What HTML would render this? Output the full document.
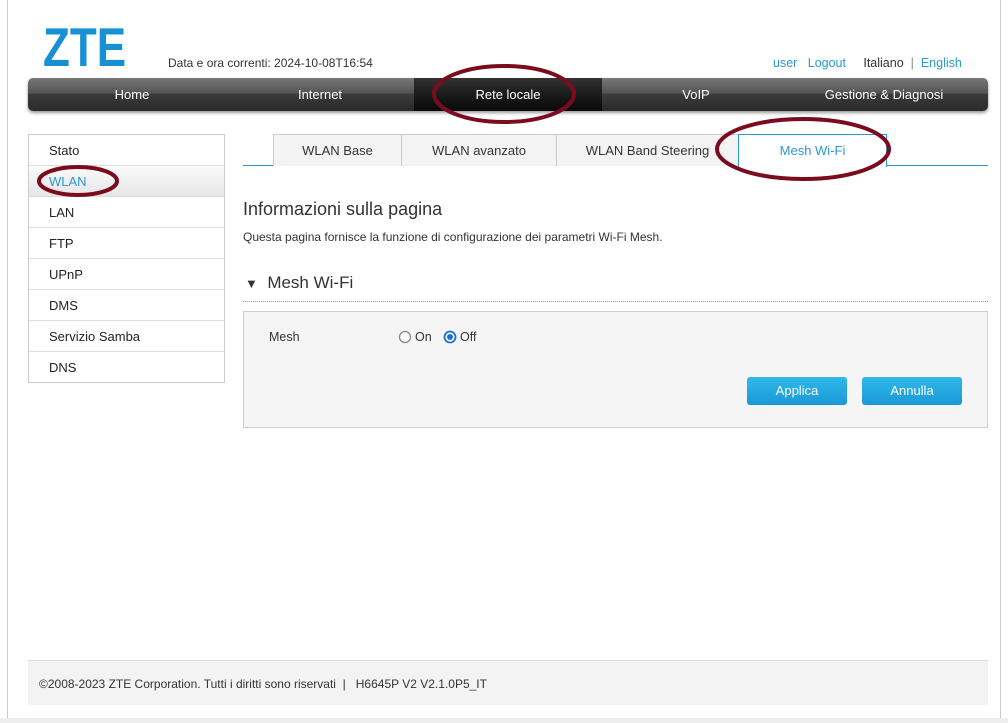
<!DOCTYPE html>
<html><head><meta charset="utf-8"><style>
*{margin:0;padding:0;box-sizing:border-box}
body{width:1008px;height:723px;background:#fff;font-family:"Liberation Sans",sans-serif;position:relative;overflow:hidden;color:#333}
.a{position:absolute}
.lnk{color:#2a9ad0}
.nav{left:28px;top:78px;width:960px;height:33px;border-radius:5px;background:linear-gradient(#777 0%,#555 45%,#3a3a3a 50%,#2a2a2a 100%);box-shadow:0 2px 3px #999;overflow:hidden}
.nav div{position:absolute;top:0;height:33px;line-height:33px;color:#fff;font-size:13px;text-align:center;width:188px}
.side{left:28px;top:134px;width:197px;height:249px;border:1px solid #ccc}
.side div{height:31px;line-height:31px;padding-left:20px;font-size:13px;border-bottom:1px solid #ddd;color:#222}
.tab{top:134px;height:32px;line-height:32px;text-align:center;font-size:13px;background:#f3f3f3;border:1px solid #ccc;border-bottom:none;color:#333}
.btn{top:377px;width:100px;height:28px;border-radius:3px;background:linear-gradient(#30b8ec,#1a98d6);color:#fff;font-size:13px;text-align:center;line-height:28px}
</style></head><body>
<div class="a" style="left:7px;top:0;width:1px;height:718px;background:#ccc"></div>
<div class="a" style="left:1000px;top:0;width:1px;height:718px;background:#ccc"></div>
<div class="a" style="left:0;top:718px;width:1008px;height:5px;background:#eee"></div>
<div class="a" style="left:43px;top:20px;font-size:55px;font-weight:bold;color:#1890d4;line-height:55px;transform:scaleX(0.8);transform-origin:left">ZTE</div>
<div class="a" style="left:168px;top:56px;font-size:12px;color:#333">Data e ora correnti: 2024-10-08T16:54</div>
<div class="a" style="left:773px;top:56px;font-size:12.5px"><span class="lnk">user</span>&nbsp;&nbsp;&nbsp;<span class="lnk">Logout</span>&nbsp;&nbsp;&nbsp;&nbsp;&nbsp;<span>Italiano</span>&nbsp;&nbsp;<span style="color:#888">|</span>&nbsp;&nbsp;<span class="lnk">English</span></div>
<div class="a nav">
<div style="left:10px">Home</div><div style="left:198px">Internet</div>
<div style="left:386px;background:linear-gradient(#333,#1a1a1a 50%,#0a0a0a)">Rete locale</div>
<div style="left:574px">VoIP</div><div style="left:762px">Gestione &amp; Diagnosi</div></div>
<div class="a side">
<div>Stato</div><div style="background:linear-gradient(#fafafa,#e6e6e6);color:#2a9ad0">WLAN</div><div>LAN</div><div>FTP</div><div>UPnP</div><div>DMS</div><div>Servizio Samba</div><div style="border:none">DNS</div></div>
<div class="a" style="left:243px;top:165px;width:745px;height:1px;background:#2a9ad0"></div>
<div class="a tab" style="left:273px;width:129px">WLAN Base</div>
<div class="a tab" style="left:401px;width:156px">WLAN avanzato</div>
<div class="a tab" style="left:556px;width:183px">WLAN Band Steering</div>
<div class="a tab" style="left:738px;width:149px;height:33px;background:#fff;border-color:#2a9ad0;color:#2a9ad0">Mesh Wi-Fi</div>
<div class="a" style="left:243px;top:199px;font-size:18px;color:#333">Informazioni sulla pagina</div>
<div class="a" style="left:243px;top:230px;font-size:12px;color:#333">Questa pagina fornisce la funzione di configurazione dei parametri Wi-Fi Mesh.</div>
<div class="a" style="left:245px;top:273px;font-size:17px;color:#333"><span style="font-size:13px">▼</span>&nbsp;&nbsp;Mesh Wi-Fi</div>
<div class="a" style="left:243px;top:301px;width:745px;border-top:1px dotted #999"></div>
<div class="a" style="left:243px;top:311px;width:745px;height:117px;background:#f5f5f5;border:1px solid #ccc"></div>
<div class="a" style="left:269px;top:330px;font-size:12.5px">Mesh</div>
<svg class="a" style="left:398px;top:330px" width="14" height="14"><circle cx="7" cy="7" r="5.5" fill="#fff" stroke="#888" stroke-width="1.3"/></svg>
<div class="a" style="left:415px;top:330px;font-size:12.5px">On</div>
<svg class="a" style="left:443px;top:330px" width="14" height="14"><circle cx="7" cy="7" r="5.5" fill="#fff" stroke="#1a6fd0" stroke-width="1.8"/><circle cx="7" cy="7" r="3" fill="#1a6fd0"/></svg>
<div class="a" style="left:460px;top:330px;font-size:12.5px">Off</div>
<div class="a btn" style="left:747px">Applica</div>
<div class="a btn" style="left:862px">Annulla</div>
<div class="a" style="left:28px;top:660px;width:960px;height:45px;background:#f3f3f3;border-top:1px solid #ddd"></div>
<div class="a" style="left:39px;top:677px;font-size:12px;color:#333">©2008-2023 ZTE Corporation. Tutti i diritti sono riservati&nbsp; |&nbsp;&nbsp; H6645P V2 V2.1.0P5_IT</div>
<svg class="a" style="left:0;top:0" width="1008" height="723">
<g fill="none" stroke="#7a0c1e" stroke-width="4">
<ellipse cx="504" cy="94" rx="70" ry="28"/>
<ellipse cx="78" cy="181" rx="39" ry="14"/>
<ellipse cx="803" cy="149" rx="86" ry="30"/>
</g></svg>
</body></html>
